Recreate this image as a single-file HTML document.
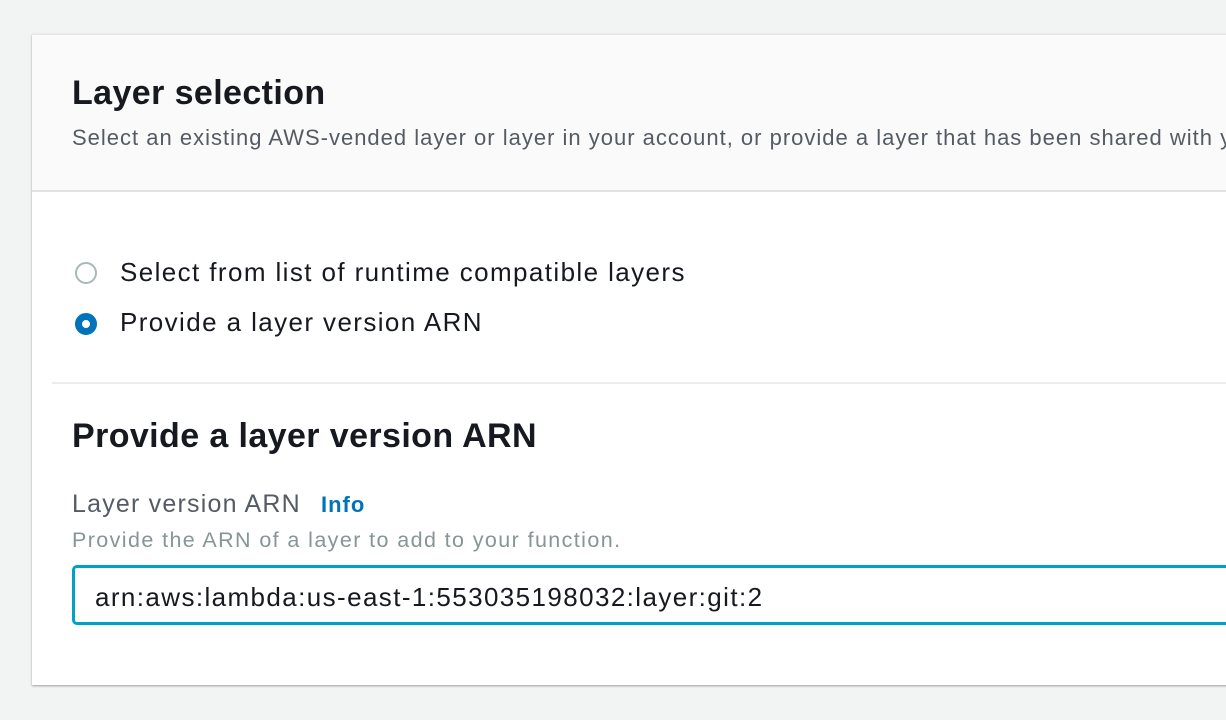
<!DOCTYPE html>
<html><head><style>
html,body{margin:0;padding:0;background:#f2f3f3;width:1226px;height:720px;overflow:hidden;font-family:"Liberation Sans",sans-serif}
.card{position:absolute;left:32px;top:34px;width:1220px;height:650px;background:#fff;box-shadow:0 1px 2px rgba(0,0,0,.35);border-top:1px solid #e5e5e5}
.head{position:absolute;left:0;top:0;right:0;height:155px;background:#fafafa;border-bottom:2px solid #e0e2e3}
.abs{position:absolute;white-space:nowrap}
h1{margin:0;font-size:34px;font-weight:bold;color:#16191f;letter-spacing:0.4px}
.sub{font-size:22px;color:#545b64;letter-spacing:1px}
.radio{width:22px;height:22px;border-radius:50%;box-sizing:border-box;position:absolute}
.r1{border:2px solid #aab7b8;background:#fff}
.r2{border:7px solid #0073bb;background:#fff}
.rt{font-size:26px;color:#16191f;letter-spacing:1.4px}
.input{position:absolute;left:40px;top:530px;width:1200px;height:60px;box-sizing:border-box;border:3px solid #00a1c9;border-radius:5px}
</style></head><body>
<div class="card">
 <div class="head">
  <div class="abs" style="left:40px;top:39px"><h1>Layer selection</h1></div>
  <div class="abs sub" style="left:40px;top:90px">Select an existing AWS-vended layer or layer in your account, or provide a layer that has been shared with you.</div>
 </div>
 <div class="radio r1" style="left:43px;top:227px"></div>
 <div class="abs rt" style="left:88px;top:222px">Select from list of runtime compatible layers</div>
 <div class="radio r2" style="left:43px;top:278px"></div>
 <div class="abs rt" style="left:88px;top:272px">Provide a layer version ARN</div>
 <div style="position:absolute;left:20px;right:0;top:347px;height:2px;background:#eaeded"></div>
 <div class="abs" style="left:40px;top:382px"><h1>Provide a layer version ARN</h1></div>
 <div class="abs" style="left:40px;top:455px;font-size:25px;color:#545b64;letter-spacing:1.2px">Layer version ARN <span style="font-size:22px;font-weight:bold;color:#0073bb;margin-left:12px;letter-spacing:1px">Info</span></div>
 <div class="abs" style="left:40px;top:493px;font-size:21.5px;color:#879596;letter-spacing:1.4px">Provide the ARN of a layer to add to your function.</div>
 <div class="input"><div class="abs rt" style="left:20px;top:14px">arn:aws:lambda:us-east-1:553035198032:layer:git:2</div></div>
</div>
</body></html>
